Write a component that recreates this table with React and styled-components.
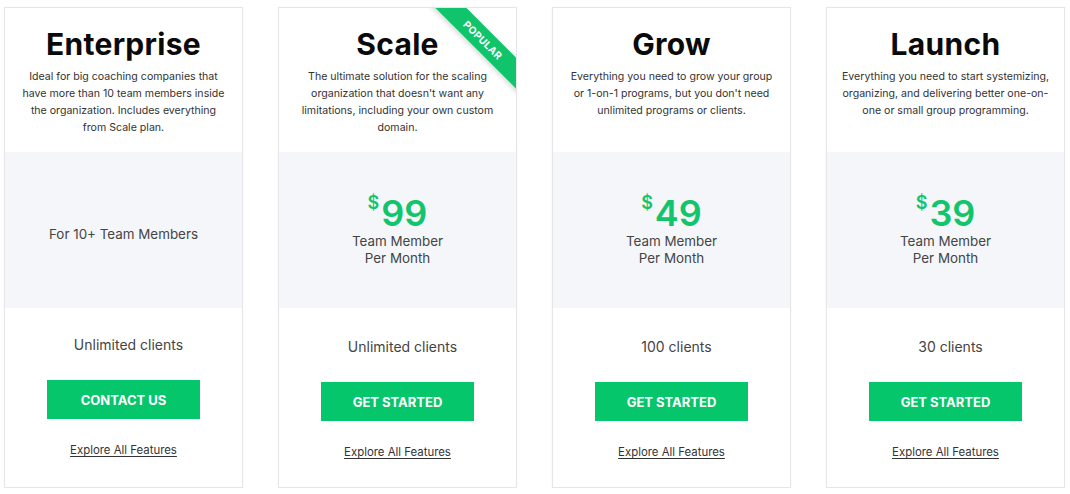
import React from "react";
import styled, { createGlobalStyle } from "styled-components";

const GlobalStyle = createGlobalStyle`
  body {
    margin: 0;
    background: #fff;
    font-family: Inter, "Noto Sans", sans-serif;
  }
`;

const Page = styled.div`
  display: flex;
  gap: 35px;
  padding: 7px 0 0 4px;
`;

const Card = styled.div`
  position: relative;
  overflow: hidden;
  width: 239px;
  height: 481px;
  box-sizing: border-box;
  border: 1px solid #e6e6e8;
  box-shadow: 0 0 3px rgba(0, 0, 0, 0.04);
  background: #fff;
  display: flex;
  flex-direction: column;
`;

const Top = styled.div`
  height: 144px;
  padding: 18px 14px 0;
  box-sizing: border-box;
  text-align: center;
`;

const Title = styled.h2`
  margin: 0;
  font-family: Inter, sans-serif;
  font-size: 30px;
  line-height: 36px;
  font-weight: 700;
  color: #0a0a0a;
  letter-spacing: 0.3px;
`;

const Description = styled.p`
  margin: 6px 0 0;
  font-size: 10.6px;
  line-height: 17px;
  color: #333;
`;

const PriceBox = styled.div`
  height: 156px;
  background: #f5f6fa;
  display: flex;
  flex-direction: column;
  align-items: center;
  justify-content: center;
  text-align: center;
  color: #444;
  font-size: 13.4px;
  line-height: 17px;
`;

const Price = styled.div`
  display: flex;
  align-items: flex-start;
  color: #12c46b;
  font-size: 36px;
  line-height: 40px;
  font-weight: 600;
`;

const Dollar = styled.span`
  font-size: 18px;
  line-height: 20px;
  font-weight: 600;
  margin-right: 2px;
`;

const Note = styled.div`
  padding-top: 8px;
`;

const Bottom = styled.div`
  flex: 1;
  display: flex;
  flex-direction: column;
  align-items: center;
  padding-top: ${p => (p.$shift ? 27 : 29)}px;
`;

const Clients = styled.div`
  font-size: 14px;
  line-height: 20px;
  color: #444;
  padding-left: 10px;
`;

const Button = styled.button`
  margin-top: 25px;
  width: 153px;
  height: 39px;
  border: 0;
  background: #05c66b;
  color: #fff;
  font-family: Inter, sans-serif;
  font-size: 13px;
  font-weight: 700;
  text-transform: uppercase;
  cursor: pointer;
`;

const Explore = styled.a`
  margin-top: 23px;
  font-size: 11.4px;
  line-height: 16px;
  color: #333;
  text-decoration: underline;
  text-underline-offset: 2px;
`;

const Ribbon = styled.div`
  position: absolute;
  top: 21px;
  right: -37px;
  width: 140px;
  height: 22px;
  background: #0fc46a;
  color: #fff;
  font-size: 10px;
  font-weight: 700;
  line-height: 22px;
  text-align: center;
  letter-spacing: 0.3px;
  transform: rotate(45deg);
  box-shadow: 0 3px 4px rgba(0, 0, 0, 0.12);
`;

const plans = [
  {
    name: "Enterprise",
    text: "Ideal for big coaching companies that have more than 10 team members inside the organization. Includes everything from Scale plan.",
    clients: "Unlimited clients",
    cta: "Contact us",
    shift: true
  },
  {
    name: "Scale",
    text: "The ultimate solution for the scaling organization that doesn't want any limitations, including your own custom domain.",
    price: 99,
    clients: "Unlimited clients",
    cta: "Get started",
    popular: true
  },
  {
    name: "Grow",
    text: "Everything you need to grow your group or 1-on-1 programs, but you don't need unlimited programs or clients.",
    price: 49,
    clients: "100 clients",
    cta: "Get started"
  },
  {
    name: "Launch",
    text: "Everything you need to start systemizing, organizing, and delivering better one-on-one or small group programming.",
    price: 39,
    clients: "30 clients",
    cta: "Get started"
  }
];

const App = () => (
  <>
    <GlobalStyle />
    <Page>
      {plans.map(plan => (
        <Card key={plan.name}>
          {plan.popular && <Ribbon>POPULAR</Ribbon>}
          <Top>
            <Title>{plan.name}</Title>
            <Description>{plan.text}</Description>
          </Top>
          <PriceBox>
            {plan.price ? (
              <>
                <Price>
                  <Dollar>$</Dollar>
                  {plan.price}
                </Price>
                <div>Team Member</div>
                <div>Per Month</div>
              </>
            ) : (
              <Note>For 10+ Team Members</Note>
            )}
          </PriceBox>
          <Bottom $shift={plan.shift}>
            <Clients>{plan.clients}</Clients>
            <Button>{plan.cta}</Button>
            <Explore href="#">Explore All Features</Explore>
          </Bottom>
        </Card>
      ))}
    </Page>
  </>
);

export default App;
